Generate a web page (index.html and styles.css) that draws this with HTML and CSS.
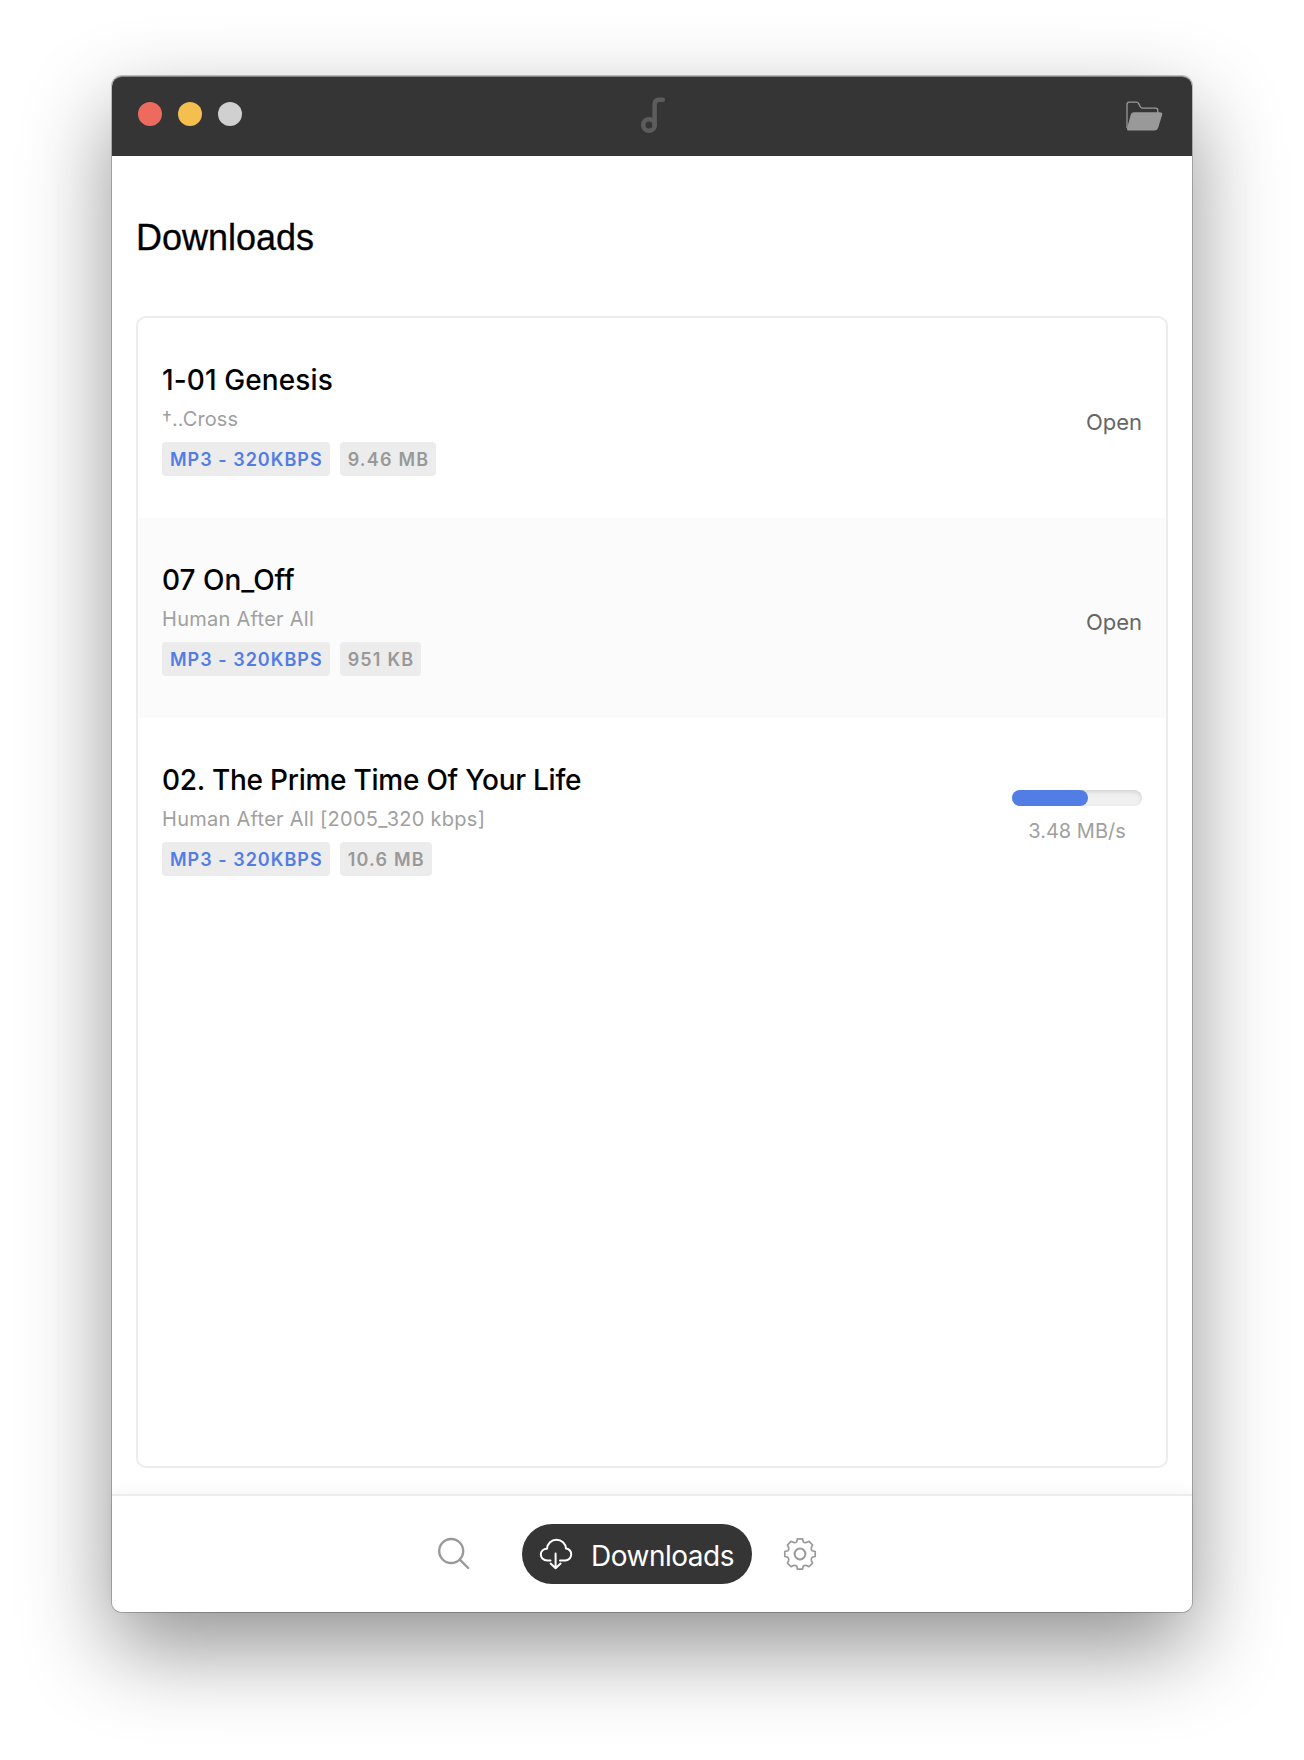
FILE: index.html
```html
<!DOCTYPE html>
<html lang="en">
<head>
<meta charset="utf-8">
<title>Downloads</title>
<link rel="stylesheet" href="styles.css">
</head>
<body>
<div class="window">
  <header class="titlebar">
    <div class="lights"><span class="light close"></span><span class="light minimize"></span><span class="light zoom"></span></div>
    <svg class="note" width="26" height="38" viewBox="0 0 26 38" fill="none" stroke="#5c5c5c" stroke-width="4.5" stroke-linecap="round"><circle cx="9" cy="28" r="5.8"/><path d="M14.6 28V7.5Q14.6 2.7 19 2.7H22.8"/></svg>
    <svg class="folder" width="38" height="32" viewBox="0 0 38 32"><path d="M2 28V4.5Q2 2.2 4.2 2.2H11.4Q13 2.2 13.7 3.6L15.3 6.8Q16 8.2 17.6 8.2H30.6Q32.8 8.2 32.8 10.4V13" fill="none" stroke="#999" stroke-width="1.3"/><path d="M9 12.2H34.6Q38 12.2 37.1 15L33.2 27.8Q32.3 30.6 29.5 30.6H4Q1.4 30.6 2.1 28L5.8 14.6Q6.5 12.2 9 12.2Z" fill="#999"/></svg>
  </header>
  <main class="content">
    <h1 class="heading">Downloads</h1>
    <ul class="list">
      <li class="row">
        <div class="info">
          <div class="name name-a">1-01 Genesis</div>
          <div class="album album-a">†..Cross</div>
          <div class="tags"><span class="tag quality">MP3 - 320KBPS</span><span class="tag">9.46 MB</span></div>
        </div>
        <a class="open">Open</a>
      </li>
      <li class="row">
        <div class="info">
          <div class="name name-b">07 On_Off</div>
          <div class="album">Human After All</div>
          <div class="tags"><span class="tag quality">MP3 - 320KBPS</span><span class="tag">951 KB</span></div>
        </div>
        <a class="open">Open</a>
      </li>
      <li class="row">
        <div class="info">
          <div class="name">02. The Prime Time Of Your Life</div>
          <div class="album">Human After All [2005_320 kbps]</div>
          <div class="tags"><span class="tag quality">MP3 - 320KBPS</span><span class="tag">10.6 MB</span></div>
        </div>
        <div class="transfer">
          <div class="bar"><div class="fill" style="width:58.5%"></div></div>
          <div class="speed">3.48 MB/s</div>
        </div>
      </li>
    </ul>
  </main>
  <nav class="nav">
    <svg class="search" width="34" height="34" viewBox="0 0 34 34" fill="none" stroke="#999" stroke-width="2.4" stroke-linecap="round"><circle cx="14.2" cy="14" r="12"/><path d="M22.8 22.6L31.2 31"/></svg>
    <a class="pill">
      <svg class="cloud" width="34" height="32" viewBox="0 0 34 32" fill="none" stroke="#fff" stroke-width="2" stroke-linecap="round" stroke-linejoin="round"><path d="M11.5 22.5H8.3C4.5 22.5 1.8 19.8 1.8 16.5C1.8 13.3 4.4 10.7 8 10.7C8.4 5.4 12.6 1.8 17.4 1.8C22.6 1.8 26.6 5.5 27 10.6C30.3 11.2 32.2 13.8 32.2 16.6C32.2 20 29.4 22.5 26.2 22.5H21M16.6 15.6V30.2M11.6 25.6L16.6 30.3L21.6 25.6"/></svg>
      <span class="pill-label">Downloads</span>
    </a>
    <svg class="gear" width="34" height="34" viewBox="-17 -17 34 34" fill="none" stroke="#999" stroke-width="1.7" stroke-linejoin="round"><circle r="5.4" stroke-width="2"/><path d="M-2.5 -15.2H2.5L3.3 -12.2Q4.6 -11 6.3 -11.5L9 -12.6L12.6 -9L11.3 -6.3Q10.8 -4.6 12.2 -3.3L15.2 -2.5V2.5L12.2 3.3Q10.8 4.6 11.3 6.3L12.6 9L9 12.6L6.3 11.5Q4.6 11 3.3 12.2L2.5 15.2H-2.5L-3.3 12.2Q-4.6 11 -6.3 11.5L-9 12.6L-12.6 9L-11.3 6.3Q-10.8 4.6 -12.2 3.3L-15.2 2.5V-2.5L-12.2 -3.3Q-10.8 -4.6 -11.3 -6.3L-12.6 -9L-9 -12.6L-6.3 -11.5Q-4.6 -11 -3.3 -12.2Z"/></svg>
  </nav>
</div>
</body>
</html>
```
FILE: styles.css
```css
* { box-sizing: border-box; }
html, body { margin: 0; background: #fff; }
body { height: 1760px; padding: 76px 112px 148px; overflow: hidden; font-family: Inter, "Liberation Sans", sans-serif; }
svg { display: block; flex: none; }
.window { height: 1536px; display: flex; flex-direction: column; background: #fff; border-radius: 10px; box-shadow: 0 0 0 1px rgba(0,0,0,.22), 0 36px 88px rgba(0,0,0,.43); }
.titlebar { height: 80px; flex: none; display: flex; align-items: flex-start; justify-content: space-between; padding: 20px 29px 0 26px; background: #353535; border-radius: 10px 10px 0 0; border-top: 1px solid #848484; }
.lights { display: flex; gap: 16px; width: 104px; padding-top: 5px; }
.light { width: 24px; height: 24px; border-radius: 50%; }
.close { background: #ed6a5e; }
.minimize { background: #f5bf4f; }
.zoom { background: #d0d0d0; }
.note { margin-right: 61px; }
.folder { margin-top: 3px; }
.content { flex: 1; padding: 60px 24px 26px; display: flex; flex-direction: column; }
.heading { margin: 0 0 56px; height: 44px; font: 400 36px/44px "Liberation Sans", sans-serif; color: #000; -webkit-text-stroke: .3px #000; }
.list { flex: 1; margin: 0; padding: 0; list-style: none; border: 2px solid #ececec; border-radius: 10px; }
.row { height: 200px; padding: 0 24px; display: flex; justify-content: space-between; }
.row:nth-child(even) { background: #fbfbfb; }
.info { padding-top: 44px; white-space: nowrap; }
.name { height: 36px; font-size: 28px; line-height: 36px; font-weight: 500; color: #000; letter-spacing: -.25px; }
.name-a { letter-spacing: .1px; }
.name-b { letter-spacing: 0; }
.album { height: 28px; margin-top: 7px; font-size: 20px; line-height: 28px; color: #a0a0a0; letter-spacing: .27px; }
.album-a { letter-spacing: .1px; }
.tags { display: flex; gap: 10px; margin-top: 9px; }
.tag { height: 34px; padding: 0 7px 0 8px; border-radius: 4px; background: #ececec; color: #999; font-size: 18px; line-height: 35px; font-weight: 600; letter-spacing: 1.2px; }
.quality { color: #527de4; letter-spacing: 1.01px; }
.open { padding-top: 90px; font-size: 22px; line-height: 28px; color: #666; }
.transfer { width: 130px; padding-top: 72px; }
.bar { height: 16px; border-radius: 8px; background: #f0f0f0; box-shadow: inset 0 2px 4px rgba(0,0,0,.12); }
.fill { height: 16px; border-radius: 8px; background: #527de4; }
.speed { margin-top: 11px; text-align: center; font-size: 20px; line-height: 28px; color: #a0a0a0; }
.nav { height: 118px; flex: none; display: flex; align-items: flex-start; border-top: 2px solid #ececec; border-radius: 0 0 10px 10px; box-shadow: 0 -4px 12px rgba(0,0,0,.04); padding: 28px 0 0 325px; background: #fff; }
.search { margin-top: 13px; }
.pill { width: 230px; height: 60px; margin: 0 31px 0 51px; padding: 14px 18px 0 17px; display: flex; border-radius: 30px; background: #353535; color: #fff; }
.pill-label { margin: 0 0 0 18px; font-size: 28px; line-height: 36px; letter-spacing: -.5px; }
.gear { margin-top: 13px; }
```
